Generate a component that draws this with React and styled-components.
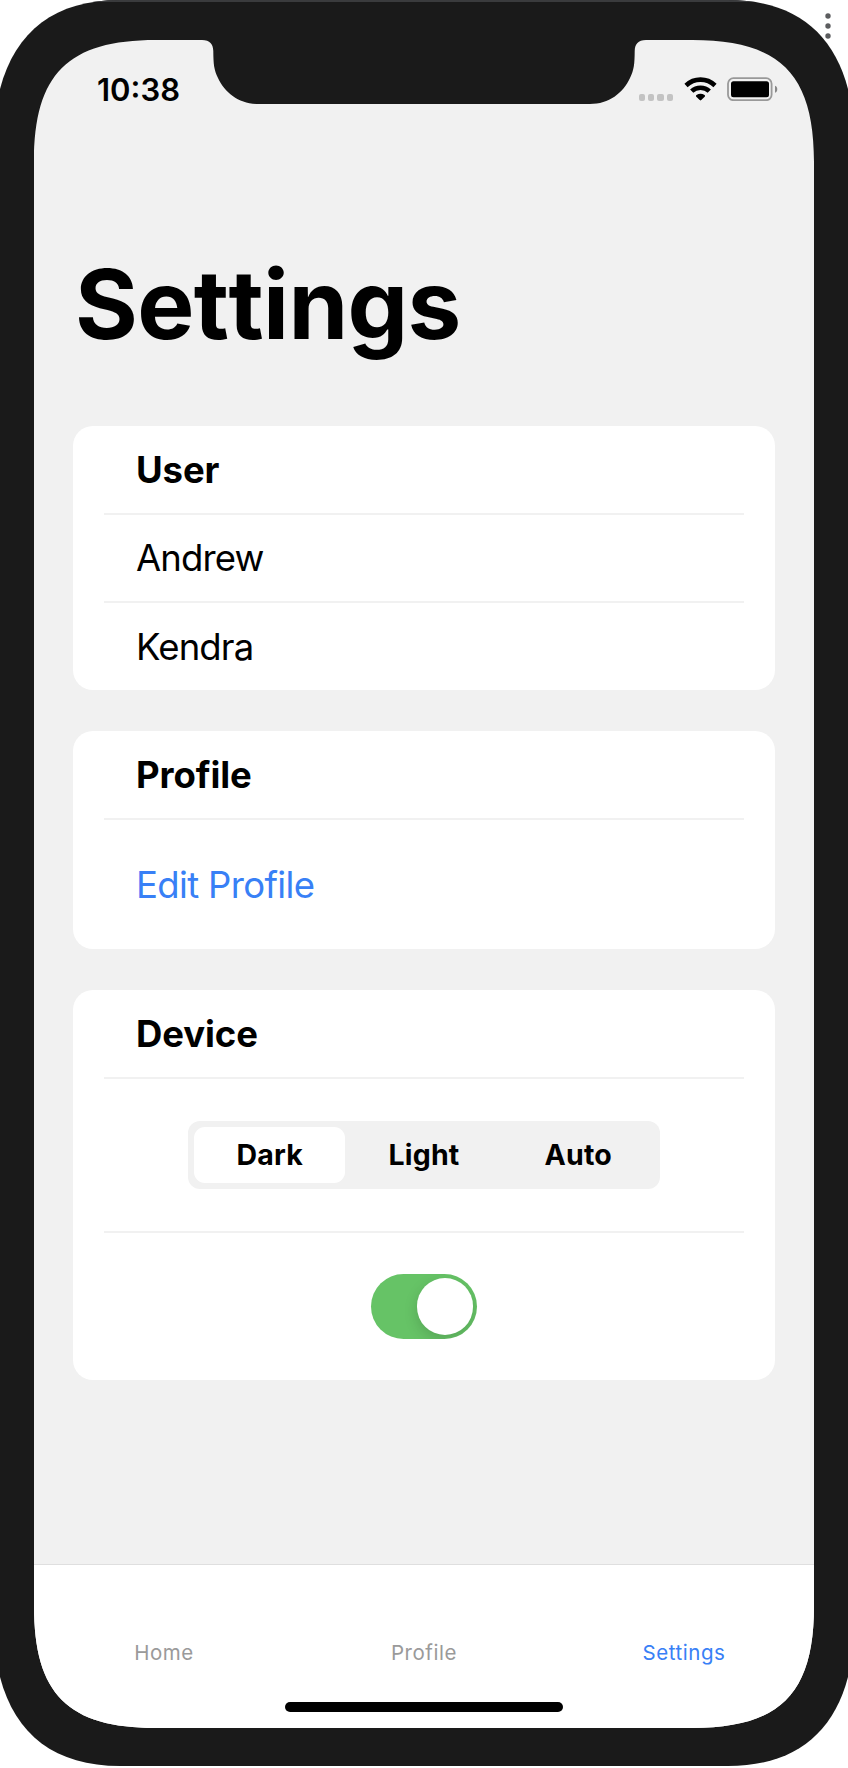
import React, { useState } from "react";
import styled, { createGlobalStyle } from "styled-components";

const GlobalStyle = createGlobalStyle`
  *, *::before, *::after { box-sizing: border-box; }
  body {
    margin: 0;
    background: #fff;
    overflow: hidden;
    font-family: Inter, "Liberation Sans", sans-serif;
    color: #000;
  }
  button { font: inherit; color: inherit; border: 0; padding: 0; background: none; }
`;

const Page = styled.div`
  position: relative;
  width: 848px;
  height: 1768px;
  overflow: hidden;
`;

const PhoneBody = styled.div`
  width: 848px;
  height: 1766px;
  padding: 38px 34px;
  background: #1a1a1a;
  border-top: 2px solid #3a3b3d;
  clip-path: path("M-7 150C-7 52 36 0 120 0H728C812 0 855 52 855 150V1616C855 1714 812 1766 728 1766H120C36 1766 -7 1714 -7 1616Z");
`;

const Screen = styled.div`
  display: flex;
  flex-direction: column;
  width: 780px;
  height: 1688px;
  background: #f1f1f1;
  clip-path: path("M0 122C0 34 34 0 122 0H168C176 0 179 4 179.3 11C179.4 24 180 30 184 38C191 53 205 64 224 64H556C575 64 589 53 596 38C600 30 600.6 24 600.7 11C601 4 604 0 612 0H658C746 0 780 34 780 122V1566C780 1654 746 1688 658 1688H122C34 1688 0 1654 0 1566Z");
`;

const StatusBar = styled.header`
  display: flex;
  justify-content: space-between;
  align-items: flex-start;
  height: 66px;
  padding: 37px 36px 0 63px;
`;

const Clock = styled.time`
  font-size: 31px;
  line-height: 26px;
  font-weight: 600;
  letter-spacing: 0;
`;

const StatusIcons = styled.div`
  display: flex;
  align-items: flex-start;
  svg { display: block; }
`;

const Signal = styled.div`
  display: flex;
  gap: 3px;
  margin: 17px 11px 0 0;
`;

const SignalDot = styled.span`
  width: 6.3px;
  height: 6.5px;
  border-radius: 2px;
  background: #c3c3c3;
`;

const WifiIcon = styled.svg`
  margin-right: 10px;
`;

const Content = styled.main`
  flex: 1;
  padding: 0 39px;
`;

const Title = styled.h1`
  margin: 144px 0 67px 2px;
  font-size: 96px;
  line-height: 109px;
  font-weight: 700;
  letter-spacing: -0.6px;
  font-kerning: none;
`;

const Cards = styled.div`
  display: flex;
  flex-direction: column;
  gap: 41px;
`;

const Card = styled.section`
  padding: 0 31px;
  border-radius: 20px;
  background: #fff;
`;

const Row = styled.div`
  display: flex;
  align-items: center;
  justify-content: ${(p) => (p.$center ? "center" : "flex-start")};
  height: ${(p) => p.$height || 88}px;
  padding: ${(p) => (p.$center ? "0" : "0 32px")};
  font-size: 36.5px;
  line-height: 44px;
  letter-spacing: -0.85px;
  & + & { border-top: 2px solid #f1f1f1; }
`;

const CardHeading = styled.h2`
  margin: 0;
  font-size: 36.5px;
  font-weight: 700;
  letter-spacing: -0.1px;
`;

const LinkButton = styled.button`
  color: #3880f6;
  letter-spacing: -0.65px;
`;

const Segments = styled.div`
  display: flex;
  gap: 3px;
  width: 472px;
  height: 68px;
  padding: 6px;
  border-radius: 12px;
  background: #f1f1f1;
`;

const Segment = styled.button`
  flex: 1;
  border-radius: 11px;
  background: ${(p) => (p.$active ? "#fff" : "transparent")};
  font-size: 28.5px;
  line-height: 34px;
  font-weight: 700;
  letter-spacing: 0.2px;
`;

const Toggle = styled.button`
  display: flex;
  justify-content: ${(p) => (p.$on ? "flex-end" : "flex-start")};
  width: 106px;
  height: 65px;
  padding: 4px;
  overflow: hidden;
  border-radius: 33px;
  background: ${(p) => (p.$on ? "#66c366" : "#e4e4e6")};
`;

const Knob = styled.span`
  width: 56.5px;
  height: 56.5px;
  border-radius: 50%;
  background: #fff;
  box-shadow: 0 5px 14px rgba(0, 0, 0, 0.15);
`;

const TabBar = styled.nav`
  display: flex;
  height: 124px;
  padding-top: 75px;
  background: #fff;
  border-top: 1px solid #dfdfdf;
`;

const Tab = styled.button`
  flex: 1;
  height: 26px;
  font-size: 20.5px;
  line-height: 26px;
  letter-spacing: 0.55px;
  color: ${(p) => (p.$active ? "#3880f6" : "#9a9a9a")};
`;

const HomeArea = styled.footer`
  display: flex;
  justify-content: center;
  height: 40.5px;
  padding-top: 14px;
  background: #fff;
`;

const HomeIndicator = styled.span`
  width: 278px;
  height: 10px;
  border-radius: 5px;
  background: #000;
`;

const MoreButton = styled.button`
  position: absolute;
  top: 11px;
  right: 15px;
  svg { display: block; }
`;

const MODES = ["Dark", "Light", "Auto"];
const TABS = ["Home", "Profile", "Settings"];

export default function App() {
  const [mode, setMode] = useState("Dark");
  const [enabled, setEnabled] = useState(true);
  const [tab, setTab] = useState("Settings");

  return (
    <Page>
      <GlobalStyle />
      <MoreButton aria-label="More options">
        <svg width="10" height="30" viewBox="0 0 10 30" fill="#5c5d5f">
          <circle cx="5" cy="5" r="2.7" />
          <circle cx="5" cy="15" r="2.7" />
          <circle cx="5" cy="25" r="2.7" />
        </svg>
      </MoreButton>
      <PhoneBody>
        <Screen>
          <StatusBar>
            <Clock>10:38</Clock>
            <StatusIcons>
              <Signal>
                {[0, 1, 2, 3].map((n) => (
                  <SignalDot key={n} />
                ))}
              </Signal>
              <WifiIcon width="33" height="24" viewBox="0 0 33 24">
                <g fill="none" stroke="#000" strokeWidth="4.6">
                  <path d="M2 8.500C10.200 .7 22.800 .7 31 8.500" />
                  <path d="M7.700 14.200C12.500 9.500 20.500 9.500 25.300 14.200" />
                </g>
                <path d="M15.700 23.100L12.300 19.700C11.700 19 11.800 18.500 12.500 18C15 16.300 18 16.300 20.500 18C21.200 18.500 21.300 19 20.700 19.700L17.300 23.100C16.700 23.600 16.300 23.600 15.700 23.100Z" />
              </WifiIcon>
              <svg width="51" height="24" viewBox="0 0 51 24">
                <rect x="1" y="1.2" width="43.6" height="22" rx="5.5" fill="none" stroke="#999" strokeWidth="1.8" />
                <rect x="4" y="4.2" width="38" height="16" rx="2.5" />
                <path d="M48 8.8c3 .8 3 6.2 0 7z" fill="#888" />
              </svg>
            </StatusIcons>
          </StatusBar>

          <Content>
            <Title>Settings</Title>
            <Cards>
              <Card>
                <Row $height={87}>
                  <CardHeading>User</CardHeading>
                </Row>
                <Row $height={88}>Andrew</Row>
                <Row $height={89}>Kendra</Row>
              </Card>
              <Card>
                <Row $height={87}>
                  <CardHeading>Profile</CardHeading>
                </Row>
                <Row $height={131}>
                  <LinkButton>Edit Profile</LinkButton>
                </Row>
              </Card>
              <Card>
                <Row $height={87}>
                  <CardHeading>Device</CardHeading>
                </Row>
                <Row $center $height={154}>
                  <Segments>
                    {MODES.map((m) => (
                      <Segment key={m} $active={m === mode} onClick={() => setMode(m)}>
                        {m}
                      </Segment>
                    ))}
                  </Segments>
                </Row>
                <Row $center $height={149}>
                  <Toggle
                    role="switch"
                    aria-checked={enabled}
                    aria-label="Device mode"
                    $on={enabled}
                    onClick={() => setEnabled(!enabled)}
                  >
                    <Knob />
                  </Toggle>
                </Row>
              </Card>
            </Cards>
          </Content>

          <TabBar>
            {TABS.map((t) => (
              <Tab key={t} $active={t === tab} onClick={() => setTab(t)}>
                {t}
              </Tab>
            ))}
          </TabBar>
          <HomeArea>
            <HomeIndicator />
          </HomeArea>
        </Screen>
      </PhoneBody>
    </Page>
  );
}
